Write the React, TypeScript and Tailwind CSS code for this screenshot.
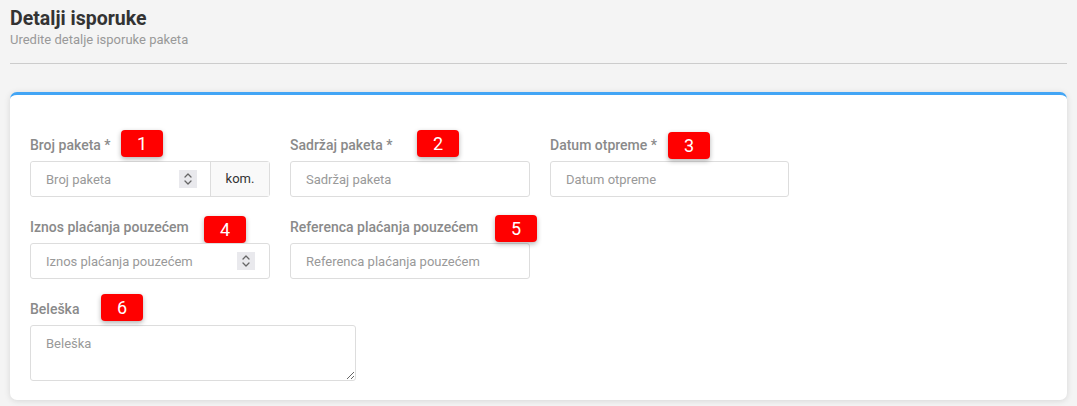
import React from 'react';

const Badge: React.FC<{ n: number; className: string }> = ({ n, className }) => (
  <span
    className={`absolute flex h-[27px] w-[42px] items-center justify-center rounded-[4px] bg-[#ff0000] text-[18px] leading-none text-white shadow-[0_2px_5px_rgba(0,0,0,0.3)] ${className}`}
  >
    {n}
  </span>
);

const Spinner: React.FC<{ className: string }> = ({ className }) => (
  <span className={`absolute flex h-[18px] w-[18px] flex-col items-center justify-center bg-[#e9e9ed] ${className}`}>
    <svg width="10" height="14" viewBox="0 0 10 14" fill="none" stroke="#666" strokeWidth="1.3" strokeLinecap="round" strokeLinejoin="round">
      <path d="M2 5l3-3 3 3" />
      <path d="M2 9l3 3 3-3" />
    </svg>
  </span>
);

const inputCls =
  'h-[36px] w-full rounded-[3px] border border-[#ddd] bg-white px-[15px] text-[13px] text-[#333] outline-none placeholder:text-[#999]';
const labelCls = 'mb-[6px] block text-[14px] font-medium leading-[20px] text-[#8a8a8a]';

export default function App() {
  return (
    <div className="min-h-screen bg-[#f4f4f4] px-[10px] pt-[6px] font-['Roboto',sans-serif] overflow-hidden h-[406px]">
      <h1 className="text-[19.5px] font-bold leading-[26px] text-[#333]">Detalji isporuke</h1>
      <p className="text-[13px] leading-[16px] text-[#999]">Uredite detalje isporuke paketa</p>
      <div className="mt-[15px] border-t border-[#ccc]" />

      <div className="mt-[28px] rounded-[7px] border-t-[3px] border-[#42a5f5] bg-white px-[20px] pt-[40px] pb-[19px] shadow-[0_1px_6px_rgba(0,0,0,0.12)]">
        <div className="grid grid-cols-[240px_240px_239px] gap-x-[20px] gap-y-[20px]">
          <div className="relative">
            <label className={labelCls}>Broj paketa *</label>
            <Badge n={1} className="left-[91px] top-[-5px]" />
            <div className="flex h-[36px] rounded-[3px] border border-[#ddd]">
              <div className="relative flex-1">
                <input className="h-full w-full rounded-l-[3px] bg-white px-[15px] text-[13px] outline-none placeholder:text-[#999]" placeholder="Broj paketa" />
                <Spinner className="right-[13px] top-[8px]" />
              </div>
              <span className="flex w-[59px] items-center justify-center border-l border-[#ddd] bg-[#f9f9f9] text-[13px] text-[#333]">kom.</span>
            </div>
          </div>

          <div className="relative">
            <label className={labelCls}>Sadržaj paketa *</label>
            <Badge n={2} className="left-[127px] top-[-5px]" />
            <input className={inputCls} placeholder="Sadržaj paketa" />
          </div>

          <div className="relative">
            <label className={labelCls}>Datum otpreme *</label>
            <Badge n={3} className="left-[118px] top-[-3px]" />
            <input className={inputCls} placeholder="Datum otpreme" />
          </div>

          <div className="relative">
            <label className={labelCls}>Iznos plaćanja pouzećem</label>
            <Badge n={4} className="left-[174px] top-[-1px]" />
            <div className="relative">
              <input className={inputCls} placeholder="Iznos plaćanja pouzećem" />
              <Spinner className="right-[15px] top-[9px]" />
            </div>
          </div>

          <div className="relative">
            <label className={labelCls}>Referenca plaćanja pouzećem</label>
            <Badge n={5} className="left-[205px] top-[-2px]" />
            <input className={inputCls} placeholder="Referenca plaćanja pouzećem" />
          </div>
          <div />

          <div className="relative col-span-3">
            <label className={labelCls}>Beleška</label>
            <Badge n={6} className="left-[71px] top-[-5px]" />
            <textarea
              className="block h-[56px] w-[326px] rounded-[3px] border border-[#ddd] bg-white px-[15px] py-[8px] text-[13px] outline-none placeholder:text-[#999]"
              placeholder="Beleška"
            />
          </div>
        </div>
      </div>
    </div>
  );
}
